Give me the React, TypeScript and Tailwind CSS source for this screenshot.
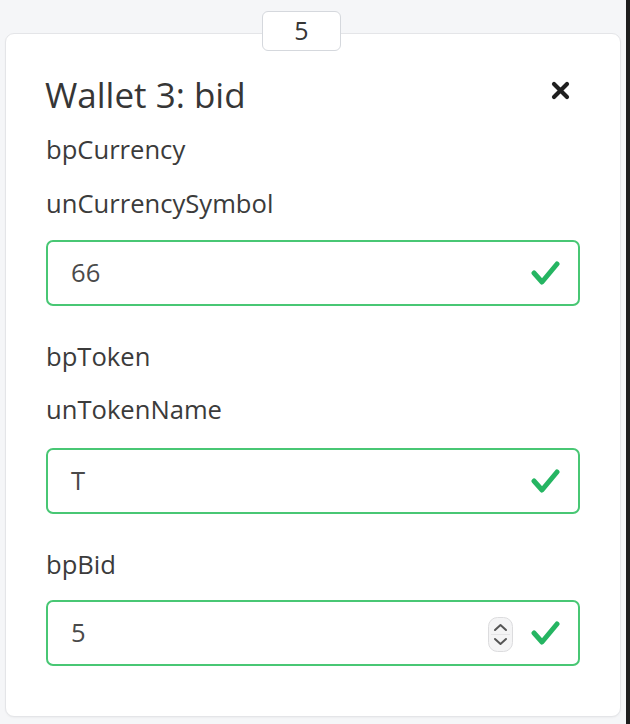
import React from "react";

const font = { fontFamily: '"Open Sans", "Noto Sans", sans-serif' };

function Check() {
  return (
    <svg width="30" height="26" viewBox="0 0 30 26" className="shrink-0">
      <polyline
        points="4,13 12,22 27,4"
        fill="none"
        stroke="#25b562"
        strokeWidth="5"
        strokeLinecap="round"
        strokeLinejoin="round"
      />
    </svg>
  );
}

function Spinner() {
  return (
    <svg width="25" height="35" viewBox="0 0 25 35" className="shrink-0">
      <rect x="0.5" y="0.5" width="24" height="34" rx="9" fill="#f4f4f5" stroke="#dcdcde" />
      <line x1="3" y1="17.5" x2="22" y2="17.5" stroke="#e4e4e6" />
      <polyline points="7,13 12.5,8 18,13" fill="none" stroke="#555" strokeWidth="2" strokeLinecap="round" strokeLinejoin="round" />
      <polyline points="7,22 12.5,27 18,22" fill="none" stroke="#555" strokeWidth="2" strokeLinecap="round" strokeLinejoin="round" />
    </svg>
  );
}

function Field({ value, number }: { value: string; number?: boolean }) {
  return (
    <div className="flex h-[66px] items-center rounded-[7px] border-2 border-[#48c774] bg-white pl-[23px] pr-[18px]">
      <span className="flex-1 text-[25.6px] leading-none text-[#4a4a4a]">{value}</span>
      {number && (
        <div className="mr-[17px] mt-[3px]">
          <Spinner />
        </div>
      )}
      <Check />
    </div>
  );
}

function Label({ children, className = "" }: { children: React.ReactNode; className?: string }) {
  return (
    <div className={"text-[25.6px] leading-[36px] text-[#3b3b3b] " + className}>{children}</div>
  );
}

export default function App() {
  return (
    <div className="flex h-[724px] w-[630px] overflow-hidden" style={font}>
      <div className="flex-1 bg-[#f5f6f8] pl-[5px] pr-[5px] pt-[33px]">
        <div className="relative h-[684px] rounded-[9px] border border-[#e4e5e8] bg-white px-[40px] pt-[37px] shadow-[0_1px_2px_rgba(0,0,0,0.04)]">
          {/* badge */}
          <div className="absolute left-[256px] top-[-23px] flex h-[40px] w-[79px] items-center justify-center rounded-[6px] border border-[#d5d8dd] bg-white text-[25px] text-[#363636]">
            5
          </div>

          <div className="flex items-start justify-between">
            <h1 className="-ml-[1px] text-[35px] leading-[48px] text-[#363636]">Wallet 3: bid</h1>
            <svg width="19" height="19" viewBox="0 0 19 19" className="mr-[10px] mt-[10px]">
              <path d="M3 3 L16 16 M16 3 L3 16" stroke="#1f1f1f" strokeWidth="4.2" strokeLinecap="round" />
            </svg>
          </div>

          <Label className="mt-[13px]">bpCurrency</Label>
          <Label className="mt-[18px]">unCurrencySymbol</Label>
          <div className="mt-[18px]">
            <Field value="66" />
          </div>

          <Label className="mt-[33px]">bpToken</Label>
          <Label className="mt-[17px]">unTokenName</Label>
          <div className="mt-[20px]">
            <Field value="T" />
          </div>

          <Label className="mt-[33px]">bpBid</Label>
          <div className="mt-[17px]">
            <Field value="5" number />
          </div>
        </div>
      </div>
      <div className="w-[4px] bg-[#1e1e1e]" />
    </div>
  );
}
